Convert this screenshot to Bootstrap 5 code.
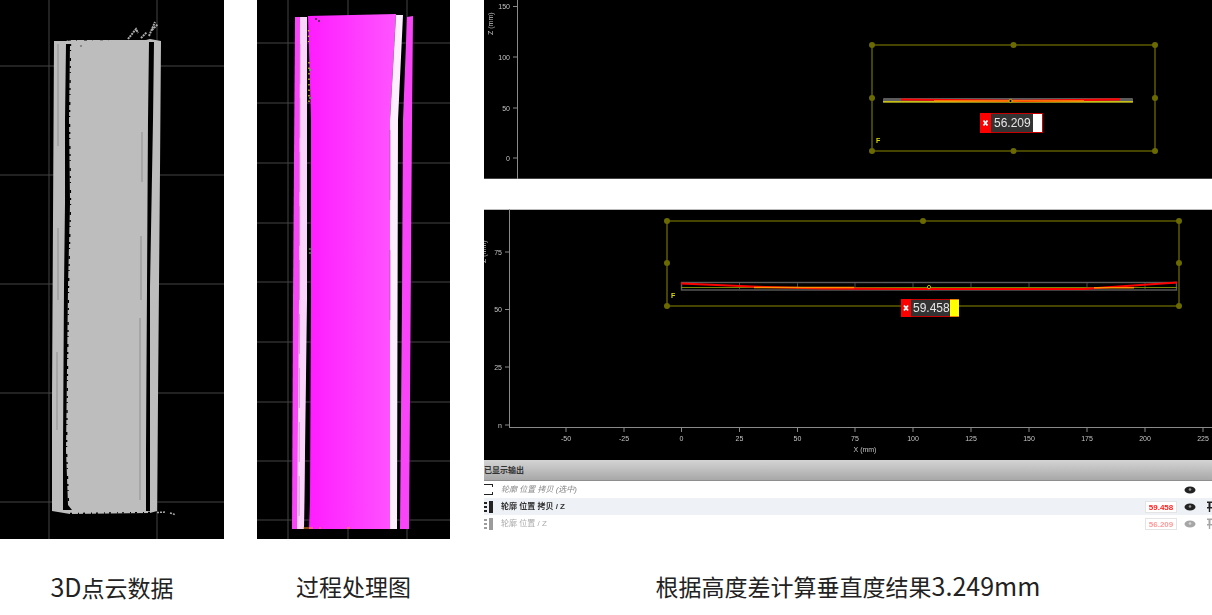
<!DOCTYPE html>
<html lang="zh-CN">
<head>
  <meta charset="UTF-8">
  <title>垂直度检测结果</title>
  <meta name="viewport" content="width=device-width, initial-scale=1.0">
  <link href="https://cdn.jsdelivr.net/npm/bootstrap@5.3.3/dist/css/bootstrap.min.css" rel="stylesheet">
  <style>
    html, body { height: 615px; overflow: hidden; background: #fff; }
    svg { display: block; }
    .soft { filter: blur(.45px); }
    .col-cloud { width: 224px; margin-right: 33px; }
    .col-process { width: 193px; margin-right: 34px; }
    .col-result { width: 728px; }
    .shot-box { height: 539px; overflow: hidden; }
    .caption-text {
      margin-top: 30px;
      font: 400 23px/34px "Noto Sans CJK SC", sans-serif;
      color: #222;
      text-align: center;
      white-space: nowrap;
    }
    .caption-text.result-caption { margin-top: 36px; }
    .latin-wide { font-size: 25px; }
    .axis-text { font: 7px "Liberation Sans", sans-serif; fill: #c4c4c4; }
    .tag-text { font: 12px "Liberation Sans", sans-serif; fill: #e6e6e6; }
    .gap-white { height: 30px; }
    .out-head {
      height: 21px;
      font: 700 8px/20px "Noto Sans CJK SC", sans-serif;
      color: #333;
      background: linear-gradient(#d4d4d4, #a8a8a8);
      border-bottom: 1px solid #8e8e8e;
    }
    .out-row {
      height: 17px;
      font: 8px/17px "Liberation Sans", "Noto Sans CJK SC", sans-serif;
      color: #444;
      white-space: nowrap;
      filter: blur(.3px);
    }
    .out-row.is-active { background: #eef2f6; font-weight: 700; color: #333; }
    .out-row.is-ghost { color: #aaa; }
    .out-row.is-ghost > svg { opacity: .45; }
    .out-row.is-italic { font-style: italic; color: #888; }
    .out-label { margin-left: 8px; }
    .out-value {
      width: 32px;
      height: 12px;
      margin-right: 7px;
      font: 700 8px/11px "Liberation Sans", sans-serif;
      text-align: center;
      color: #f22;
      background: #fff;
      border: 1px solid #e4e4e4;
    }
    .is-ghost .out-value { color: #ff9a9a; }
    .is-ghost .out-eye, .is-ghost .out-pin { opacity: .4; }
    .out-eye { margin-right: 11px; }
    .out-slot { width: 5px; }
  </style>
</head>
<body>

  <div class="d-flex">

    <!-- 3D点云 -->
    <div class="col-cloud flex-shrink-0">
      <div class="shot-box">
        <svg class="soft" width="224" height="539" viewBox="0 0 224 539">
          <rect width="224" height="539" fill="#000"/>
          <path d="M0 66H224M0 175H224M0 284H224M0 393H224M0 502H224M49 0V539M157 0V539" stroke="#444" stroke-width="1"/>
          <path d="M54 41L66 41L69 40L146 40L150 39L161 41L160 170L158 400L157 511L150 513L70 514L52 511L52 400Z" fill="#bdbdbd"/>
          <path d="M66 44L70 44L69 120L70 203L68 287L66 450L68 505L72 510L63 510L63 450L64 287L65 203L65 120Z" fill="#000"/>
          <path d="M149 42L154 42L153 120L150 287L150 450L150 511L146 511L146 450L147 287L148 120Z" fill="#000"/>
          <path d="M58 44V146M58 228V300M57 352V430M142 132V182M141 236V300M140 318V500" stroke="#7c7c7c" stroke-width=".7" fill="none"/>
          <path d="M68 40L146 39" stroke="#000" stroke-width="1.300" stroke-dasharray="3 5 1 7"/>
          <path d="M70 513.500L150 512.500" stroke="#000" stroke-width="1.400" stroke-dasharray="2 6 1 4"/>
          <path d="M128 39L136 29L138 33M141 38L147 32M149 36L155 22M152 30L158 24" stroke="#aaa" stroke-width="2" fill="none" stroke-dasharray="2 .8"/>
          <path d="M157 512.500L166 512M170 513L175 514.500" stroke="#aaa" stroke-width="1.500" stroke-dasharray="2 1"/>
          <path d="M70.500 44L69.500 120L70.500 203L68.500 287L66.500 450L68.500 505" stroke="#000" stroke-width="1.400" fill="none" stroke-dasharray="2 4 1 7 3 5"/>
          <circle cx="81" cy="46" r="1" fill="#777"/>
        </svg>
      </div>
      <div class="caption-text"><span class="latin-wide">3D</span>点云数据</div>
    </div>

    <!-- 过程处理 -->
    <div class="col-process flex-shrink-0">
      <div class="shot-box">
        <svg class="soft" width="193" height="539" viewBox="0 0 193 539">
          <defs>
            <linearGradient id="mainPink" x1="0" x2="1" y1="0" y2="0">
              <stop offset="0" stop-color="#ff1cff"/>
              <stop offset="1" stop-color="#ff55ff"/>
            </linearGradient>
          </defs>
          <rect width="193" height="539" fill="#000"/>
          <path d="M0 43H193M0 103H193M0 163H193M0 223H193M0 282H193M0 342H193M0 402H193M0 461H193M0 520H193M31 0V539M91 0V539M150 0V539" stroke="#444"/>
          <!-- 左边带 -->
          <path d="M38 17L50 17L50 120L49 300L47 529L35 529L36 300Z" fill="#f845f8"/>
          <path d="M43 17L50 17L50 120L50 300L47 529L40 529L42 300Z" fill="#fbd4fb"/>
          <path d="M43 44L42 529" stroke="#b080b0" stroke-width=".7" stroke-dasharray="40 14"/>
          <!-- 主体 -->
          <path d="M51 16L139 14L133 120L133 529L52 529L53 500L54 300L54 120Z" fill="url(#mainPink)"/>
          <path d="M139 15L146 15L141 120L140 529L133 529L133 120Z" fill="#fdeefd"/>
          <path d="M133 130V200M133 250V320" stroke="#9a5a9a" stroke-width=".7"/>
          <!-- 右边带 -->
          <path d="M150 17L156 16L155 120L153 400L152 529L143 529L145 300L146 120Z" fill="#f845f8"/>
          <circle cx="59" cy="19" r="1" fill="#333"/>
          <circle cx="62" cy="21" r="1" fill="#333"/>
          <path d="M51.500 30V42M52 62V105" stroke="#c8c820" stroke-width="1.500" stroke-dasharray="1.500 4"/>
          <circle cx="53" cy="70" r="1" fill="#2fd02f"/>
          <circle cx="53" cy="98" r="1" fill="#2fd02f"/>
          <circle cx="53" cy="249" r=".9" fill="#20c020"/>
          <circle cx="53" cy="253" r=".9" fill="#20c020"/>
          <path d="M46 528H56M62 528H64M90 528H93" stroke="#ff9a20" stroke-width="1.200"/>
        </svg>
      </div>
      <div class="caption-text">过程处理图</div>
    </div>

    <!-- 高度差结果 -->
    <div class="col-result flex-shrink-0 overflow-hidden">
      <svg class="soft" width="728" height="179" viewBox="0 0 728 179">
        <rect width="728" height="179" fill="#000"/>
        <path d="M0 178.500H728" stroke="#444"/>
        <path d="M33.500 0V179" stroke="#8a8a8a"/>
        <path d="M29 6.500H33M29 57H33M29 108H33M29 158H33" stroke="#888"/>
        <text class="axis-text" x="26" y="9" text-anchor="end">150</text>
        <text class="axis-text" x="26" y="59.500" text-anchor="end">100</text>
        <text class="axis-text" x="26" y="110.500" text-anchor="end">50</text>
        <text class="axis-text" x="26" y="160.500" text-anchor="end">0</text>
        <text class="axis-text" transform="translate(9 35) rotate(-90)">Z (mm)</text>

        <rect x="388" y="45" width="283" height="106" fill="none" stroke="#6a6a00" stroke-width="1.300"/>
        <g fill="#6a6a00">
          <circle cx="388" cy="45" r="3"/><circle cx="529.500" cy="45" r="3"/><circle cx="671" cy="45" r="3"/>
          <circle cx="388" cy="98" r="3"/><circle cx="671" cy="98" r="3"/>
          <circle cx="388" cy="151" r="3"/><circle cx="529.500" cy="151" r="3"/><circle cx="671" cy="151" r="3"/>
        </g>
        <text x="392" y="143" font-family="Liberation Sans, sans-serif" font-size="7" font-weight="700" fill="#d8d800">F</text>
        <rect x="399" y="98" width="250" height="4.500" rx="1" fill="#5c5c5c"/>
        <path d="M399 101.800H649" stroke="#e8e000" stroke-width="1.200"/>
        <path d="M417 99.500L540 100.800L636 99.300" stroke="#f00" stroke-width="2.200" fill="none"/>
        <path d="M450 100.800H600" stroke="#ff9000" stroke-width="1.300"/>
        <circle cx="526.500" cy="101" r="1.600" fill="#000" stroke="#c8c800" stroke-width=".9"/>

        <rect x="496.500" y="113.500" width="62" height="19" fill="#333" stroke="#c40000"/>
        <rect x="496" y="113" width="11" height="20" fill="#f00"/>
        <path d="M499.500 120.500L503.500 125.500M503.500 120.500L499.500 125.500" stroke="#fff" stroke-width="1.800"/>
        <rect x="549" y="114" width="9" height="18" fill="#fff"/>
        <text class="tag-text" x="510" y="127">56.209</text>
      </svg>

      <div class="gap-white"></div>

      <svg class="soft" width="728" height="251" viewBox="0 0 728 251">
        <rect width="728" height="251" fill="#000"/>
        <path d="M0 .5H728" stroke="#bbb"/>
        <path d="M25.500 0V219M25 218.500H728" stroke="#8a8a8a"/>
        <path d="M21 43H25M21 100.500H25M21 158H25M21 216H25" stroke="#888"/>
        <path d="M82 219V223M140 219V223M197.500 219V223M255.500 219V223M313.500 219V223M371 219V223M429 219V223M487 219V223M545 219V223M603 219V223M661 219V223M719 219V223" stroke="#888"/>
        <text class="axis-text" x="18" y="45.500" text-anchor="end">75</text>
        <text class="axis-text" x="18" y="103" text-anchor="end">50</text>
        <text class="axis-text" x="18" y="160.500" text-anchor="end">25</text>
        <text class="axis-text" x="18" y="218.500" text-anchor="end">n</text>
        <text class="axis-text" transform="translate(2 54) rotate(-90)">Z (mm)</text>
        <g class="axis-text" text-anchor="middle">
          <text x="82" y="231.500">-50</text><text x="140" y="231.500">-25</text><text x="197.500" y="231.500">0</text>
          <text x="255.500" y="231.500">25</text><text x="313.500" y="231.500">50</text><text x="371" y="231.500">75</text>
          <text x="429" y="231.500">100</text><text x="487" y="231.500">125</text><text x="545" y="231.500">150</text>
          <text x="603" y="231.500">175</text><text x="661" y="231.500">200</text><text x="719" y="231.500">225</text>
          <text x="381" y="243">X (mm)</text>
        </g>

        <rect x="183" y="12" width="512" height="85" fill="none" stroke="#6a6a00" stroke-width="1.300"/>
        <g fill="#6a6a00">
          <circle cx="183" cy="12" r="3"/><circle cx="439" cy="12" r="3"/><circle cx="695" cy="12" r="3"/>
          <circle cx="183" cy="54" r="3"/><circle cx="695" cy="54" r="3"/>
          <circle cx="183" cy="97" r="3"/><circle cx="695" cy="97" r="3"/>
        </g>
        <text x="187" y="89" font-family="Liberation Sans, sans-serif" font-size="7" font-weight="700" fill="#d8d800">F</text>
        <rect x="197.500" y="73.500" width="495" height="7.500" fill="none" stroke="#5c5c5c" stroke-width="1.400"/>
        <path d="M255.500 74V80M313.500 74V80M371 74V80M429 74V80M487 74V80M545 74V80M603 74V80M661 74V80" stroke="#4a4a4a"/>
        <path d="M197 78.500H693" stroke="#7a8a00" stroke-width="1.200"/>
        <path d="M197 74.500L280 78L340 79.500L430 80L600 80L620 78.500L693 73.500" stroke="#f00" stroke-width="2.200" fill="none"/>
        <path d="M270 78.500H370M610 78.700H650" stroke="#ff9000" stroke-width="1.400"/>
        <circle cx="445" cy="78" r="1.600" fill="#000" stroke="#c8c800" stroke-width=".9"/>

        <rect x="417.500" y="90.500" width="57" height="17" fill="#333" stroke="#c40000"/>
        <rect x="417" y="90" width="10" height="18" fill="#f00"/>
        <path d="M420 96.500L424 101.500M424 96.500L420 101.500" stroke="#fff" stroke-width="1.800"/>
        <rect x="466" y="90.500" width="9" height="17" fill="#ff0"/>
        <text class="tag-text" x="429" y="103">59.458</text>
      </svg>

      <div class="out-head">已显示输出</div>

      <div class="out-row is-italic d-flex align-items-center">
        <svg class="flex-shrink-0" width="9" height="11" viewBox="0 0 9 11">
          <path d="M0 .5H9M0 10.500H9M8.500 0V3M8.500 8V11" stroke="#222" fill="none"/>
        </svg>
        <span class="out-label">轮廓 位置 拷贝 (选中)</span>
        <span class="ms-auto out-eye">
          <svg width="12" height="8" viewBox="0 0 12 8"><ellipse cx="6" cy="4" rx="5.500" ry="3.500" fill="#222"/><circle cx="6" cy="3.500" r="1.300" fill="#999"/></svg>
        </span>
        <span class="out-slot"></span>
      </div>
      <div class="out-row is-active d-flex align-items-center">
        <svg class="flex-shrink-0" width="9" height="12" viewBox="0 0 9 12">
          <path d="M0 1H3V3H0ZM0 5H3V7H0ZM0 9H3V11H0ZM5 0H9V12H5Z" fill="#222"/>
        </svg>
        <span class="out-label">轮廓 位置 拷贝 / Z</span>
        <span class="ms-auto out-value">59.458</span>
        <span class="out-eye">
          <svg width="12" height="8" viewBox="0 0 12 8"><ellipse cx="6" cy="4" rx="5.500" ry="3.500" fill="#222"/><circle cx="6" cy="3.500" r="1.300" fill="#999"/></svg>
        </span>
        <span class="out-slot out-pin">
          <svg width="5" height="11" viewBox="0 0 5 11"><path d="M0 .5H5V2H3.500V6H5V7.500H3.200V11H1.800V7.500H0V6H1.500V2H0Z" fill="#222"/></svg>
        </span>
      </div>
      <div class="out-row is-ghost d-flex align-items-center">
        <svg class="flex-shrink-0" width="9" height="12" viewBox="0 0 9 12">
          <path d="M0 1H3V3H0ZM0 5H3V7H0ZM0 9H3V11H0ZM5 0H9V12H5Z" fill="#222"/>
        </svg>
        <span class="out-label">轮廓 位置 / Z</span>
        <span class="ms-auto out-value">56.209</span>
        <span class="out-eye">
          <svg width="12" height="8" viewBox="0 0 12 8"><ellipse cx="6" cy="4" rx="5.500" ry="3.500" fill="#222"/><circle cx="6" cy="3.500" r="1.300" fill="#999"/></svg>
        </span>
        <span class="out-slot out-pin">
          <svg width="5" height="11" viewBox="0 0 5 11"><path d="M0 .5H5V2H3.500V6H5V7.500H3.200V11H1.800V7.500H0V6H1.500V2H0Z" fill="#222"/></svg>
        </span>
      </div>

      <div class="caption-text result-caption">根据高度差计算垂直度结果<span class="latin-wide">3.249mm</span></div>
    </div>

  </div>

  <script src="https://cdn.jsdelivr.net/npm/bootstrap@5.3.3/dist/js/bootstrap.bundle.min.js"></script>
</body>
</html>
